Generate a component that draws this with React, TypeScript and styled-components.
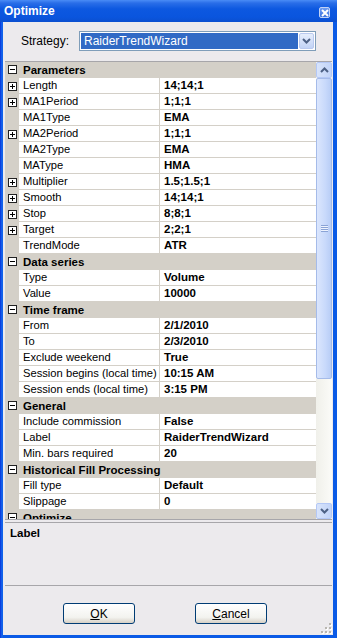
import React from "react";
import styled, { createGlobalStyle } from "styled-components";

type Item =
  | { kind: "cat"; label: string }
  | { kind: "prop"; label: string; value: string; expand?: boolean };

const items: Item[] = [
  { kind: "cat", label: "Parameters" },
  { kind: "prop", label: "Length", value: "14;14;1", expand: true },
  { kind: "prop", label: "MA1Period", value: "1;1;1", expand: true },
  { kind: "prop", label: "MA1Type", value: "EMA" },
  { kind: "prop", label: "MA2Period", value: "1;1;1", expand: true },
  { kind: "prop", label: "MA2Type", value: "EMA" },
  { kind: "prop", label: "MAType", value: "HMA" },
  { kind: "prop", label: "Multiplier", value: "1.5;1.5;1", expand: true },
  { kind: "prop", label: "Smooth", value: "14;14;1", expand: true },
  { kind: "prop", label: "Stop", value: "8;8;1", expand: true },
  { kind: "prop", label: "Target", value: "2;2;1", expand: true },
  { kind: "prop", label: "TrendMode", value: "ATR" },
  { kind: "cat", label: "Data series" },
  { kind: "prop", label: "Type", value: "Volume" },
  { kind: "prop", label: "Value", value: "10000" },
  { kind: "cat", label: "Time frame" },
  { kind: "prop", label: "From", value: "2/1/2010" },
  { kind: "prop", label: "To", value: "2/3/2010" },
  { kind: "prop", label: "Exclude weekend", value: "True" },
  { kind: "prop", label: "Session begins (local time)", value: "10:15 AM" },
  { kind: "prop", label: "Session ends (local time)", value: "3:15 PM" },
  { kind: "cat", label: "General" },
  { kind: "prop", label: "Include commission", value: "False" },
  { kind: "prop", label: "Label", value: "RaiderTrendWizard" },
  { kind: "prop", label: "Min. bars required", value: "20" },
  { kind: "cat", label: "Historical Fill Processing" },
  { kind: "prop", label: "Fill type", value: "Default" },
  { kind: "prop", label: "Slippage", value: "0" },
  { kind: "cat", label: "Optimize" },
];

const Glyph: React.FC<{ open?: boolean }> = ({ open }) => (
  <svg width="9" height="9" viewBox="0 0 9 9">
    <rect x="0.5" y="0.5" width="8" height="8" fill="#fff" stroke="#222" />
    <path d="M2 4.5h5" stroke="#000" />
    {!open && <path d="M4.5 2v5" stroke="#000" />}
  </svg>
);

const Chevron: React.FC<{ up?: boolean }> = ({ up }) => (
  <svg width="9" height="6" viewBox="0 0 9 6">
    <path
      d={up ? "M1 5L4.5 1.5L8 5" : "M1 1L4.5 4.5L8 1"}
      fill="none"
      stroke="#4d6185"
      strokeWidth="2"
    />
  </svg>
);

const App: React.FC = () => {
  return (
    <>
      <GlobalStyle />
      <Window>
        <TitleBar>
          Optimize
          <CloseButton>
            <svg width="8" height="8" viewBox="0 0 8 8">
              <path d="M1 1L7 7M7 1L1 7" stroke="#fff" strokeWidth="2" />
            </svg>
          </CloseButton>
        </TitleBar>
        <Body>
          <StrategyRow>
            <StrategyLabel>Strategy:</StrategyLabel>
            <Combo>
              <ComboText>RaiderTrendWizard</ComboText>
              <ComboButton>
                <Chevron />
              </ComboButton>
            </Combo>
          </StrategyRow>

          <Grid>
            <Rows>
              {items.map((it, i) =>
                it.kind === "cat" ? (
                  <CategoryRow key={i}>
                    <MarginCell>
                      <Glyph open />
                    </MarginCell>
                    <CategoryText>{it.label}</CategoryText>
                  </CategoryRow>
                ) : (
                  <PropRow key={i}>
                    <MarginCell>{it.expand && <Glyph />}</MarginCell>
                    <NameCell>{it.label}</NameCell>
                    <ValueCell>{it.value}</ValueCell>
                  </PropRow>
                )
              )}
            </Rows>
            <ScrollBar>
              <ScrollButton>
                <Chevron up />
              </ScrollButton>
              <Thumb>
                <Grip />
              </Thumb>
              <Track />
              <ScrollButton>
                <Chevron />
              </ScrollButton>
            </ScrollBar>
          </Grid>

          <Description>
            <DescTitle>Label</DescTitle>
          </Description>

          <ButtonRow>
            <Button>
              <u>O</u>K
            </Button>
            <Button>
              <u>C</u>ancel
            </Button>
          </ButtonRow>
          <ResizeGrip>
            <svg width="11" height="11" viewBox="0 0 11 11">
              {[
                [9, 1],
                [9, 5],
                [5, 5],
                [9, 9],
                [5, 9],
                [1, 9],
              ].map(([x, y], k) => (
                <g key={k}>
                  <rect x={x} y={y} width="2" height="2" fill="#fff" />
                  <rect x={x - 1} y={y - 1} width="2" height="2" fill="#b8b6b0" />
                </g>
              ))}
            </svg>
          </ResizeGrip>
        </Body>
      </Window>
    </>
  );
};

export default App;

// Styles
const GlobalStyle = createGlobalStyle`
  body {
    margin: 0;
    font-family: "Liberation Sans", Arial, sans-serif;
    font-size: 11px;
  }
`;

const Window = styled.div`
  width: 337px;
  height: 638px;
  box-sizing: border-box;
  padding: 0 4px 3px 3px;
  display: flex;
  flex-direction: column;
  background: linear-gradient(90deg, #0831d9 0, #166aee 2px, #0a5ae6 3px, #0a5ae6 100%);
`;

const TitleBar = styled.div`
  height: 22px;
  margin: 0 -4px 0 -3px;
  padding-left: 4px;
  display: flex;
  align-items: center;
  position: relative;
  color: #fff;
  font-weight: bold;
  font-size: 12px;
  background: linear-gradient(
    180deg,
    #4a8cf6 0,
    #2a6ee8 3px,
    #0d58e0 9px,
    #0a55de 17px,
    #0b4fd0 22px
  );
`;

const CloseButton = styled.div`
  position: absolute;
  right: 7px;
  top: 7px;
  width: 11px;
  height: 11px;
  box-sizing: border-box;
  border: 1px solid #c3d3f5;
  border-radius: 2px;
  background: linear-gradient(180deg, #6d9cf2, #3c73e0);
  display: flex;
  align-items: center;
  justify-content: center;
`;

const Body = styled.div`
  flex: 1;
  position: relative;
  background: #eceaed;
  display: flex;
  flex-direction: column;
  padding-top: 9px;
`;

const StrategyRow = styled.div`
  display: flex;
  align-items: center;
  height: 20px;
`;

const StrategyLabel = styled.span`
  margin-left: 18px;
  width: 58px;
  font-size: 12px;
  color: #000;
`;

const Combo = styled.div`
  width: 237px;
  height: 20px;
  box-sizing: border-box;
  border: 1px solid #7f9db9;
  background: #fff;
  display: flex;
  padding: 1px;
  gap: 1px;
`;

const ComboText = styled.div`
  flex: 1;
  background: #316ac5;
  color: #fff;
  font-size: 12px;
  line-height: 16px;
  padding-left: 3px;
`;

const ComboButton = styled.div`
  width: 15px;
  box-sizing: border-box;
  border: 1px solid #b9c9ef;
  border-radius: 2px;
  background: linear-gradient(180deg, #e6eefc, #c2d3f6);
  display: flex;
  align-items: center;
  justify-content: center;
`;

const Grid = styled.div`
  margin: 10px 1px 0 2px;
  height: 457px;
  border-top: 1px solid #a7a6aa;
  border-bottom: 1px solid #a7a6aa;
  display: flex;
  overflow: hidden;
`;

const Rows = styled.div`
  flex: 1;
  overflow: hidden;
  background: #fff;
`;

const CategoryRow = styled.div`
  display: flex;
  align-items: center;
  height: 16px;
  box-sizing: border-box;
  border-bottom: 1px solid #d4d0c8;
  background: #d4d0c8;
`;

const MarginCell = styled.div`
  width: 14px;
  height: 100%;
  flex: none;
  background: #d4d0c8;
  display: flex;
  align-items: center;
  justify-content: center;
`;

const CategoryText = styled.span`
  padding-left: 4px;
  font-weight: bold;
  font-size: 11.5px;
  white-space: nowrap;
`;

const PropRow = styled.div`
  display: flex;
  height: 16px;
  box-sizing: border-box;
  line-height: 15px;
`;

const NameCell = styled.div`
  width: 141px;
  flex: none;
  box-sizing: border-box;
  padding-left: 4px;
  border-right: 1px solid #d4d0c8;
  border-bottom: 1px solid #d4d0c8;
  white-space: nowrap;
  overflow: hidden;
  font-size: 11.2px;
  color: #000;
`;

const ValueCell = styled.div`
  flex: 1;
  padding-left: 4px;
  border-bottom: 1px solid #d4d0c8;
  font-weight: bold;
  font-size: 11.5px;
  white-space: nowrap;
  color: #000;
`;

const ScrollBar = styled.div`
  width: 16px;
  flex: none;
  display: flex;
  flex-direction: column;
  background: #f4f4f0;
`;

const ScrollButton = styled.div`
  height: 16px;
  box-sizing: border-box;
  border: 1px solid #b4c8f6;
  border-radius: 2px;
  background: linear-gradient(90deg, #d8e4fb, #c2d4f8);
  display: flex;
  align-items: center;
  justify-content: center;
`;

const Thumb = styled.div`
  height: 301px;
  box-sizing: border-box;
  border: 1px solid #a5bbe9;
  border-radius: 2px;
  background: linear-gradient(90deg, #dbe6fd, #c8d9fb 60%, #b8cdf6);
  display: flex;
  align-items: center;
  justify-content: center;
`;

const Grip = styled.div`
  width: 7px;
  height: 7px;
  background: repeating-linear-gradient(
    180deg,
    #8aa3d6 0,
    #8aa3d6 1px,
    #eef3fe 1px,
    #eef3fe 2px
  );
`;

const Track = styled.div`
  flex: 1;
  background: linear-gradient(90deg, #f0f0ea, #fbfbf8);
`;

const Description = styled.div`
  margin: 2px 1px 0 2px;
  height: 58px;
  border-top: 1px solid #a7a6aa;
  border-bottom: 1px solid #a7a6aa;
  padding: 4px 0 0 5px;
`;

const DescTitle = styled.div`
  font-weight: bold;
  font-size: 11.5px;
  color: #000;
`;

const ButtonRow = styled.div`
  display: flex;
  gap: 60px;
  padding-left: 60px;
  margin-top: 17px;
`;

const Button = styled.div`
  width: 72px;
  height: 21px;
  box-sizing: border-box;
  border: 1px solid #003c74;
  border-radius: 3px;
  background: linear-gradient(180deg, #ffffff, #f3f3ef 70%, #d6d0c5);
  display: flex;
  align-items: center;
  justify-content: center;
  font-size: 12px;
  color: #000;
`;

const ResizeGrip = styled.div`
  position: absolute;
  right: 1px;
  bottom: 1px;
  line-height: 0;
`;
